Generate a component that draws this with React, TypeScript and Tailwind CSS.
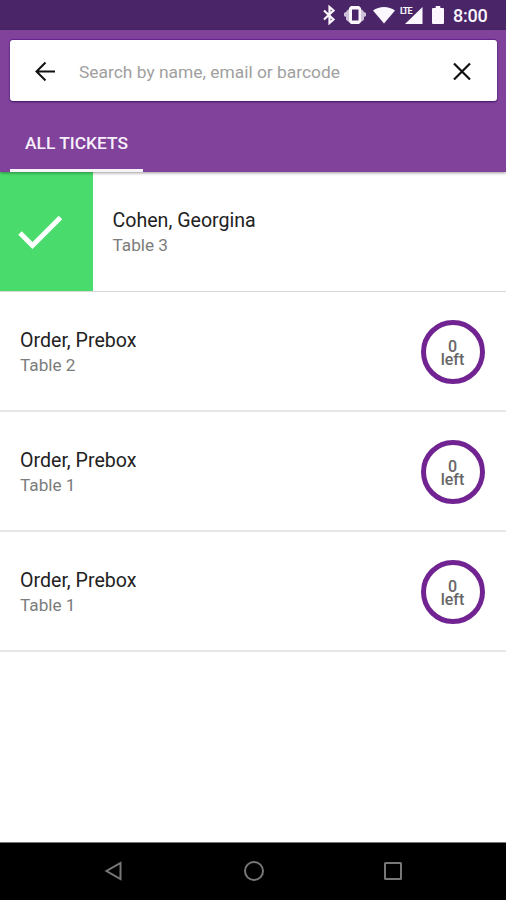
import React from 'react';

type Ticket = { name: string; table: string };

const tickets: Ticket[] = [
  { name: 'Order, Prebox', table: 'Table 2' },
  { name: 'Order, Prebox', table: 'Table 1' },
  { name: 'Order, Prebox', table: 'Table 1' },
];

function StatusBar() {
  return (
    <div className="flex h-[30px] items-center justify-end bg-[#4a2668] pr-[18px] text-[#fbf7fd]">
      <svg className="mr-[8px] h-5 w-3.5" viewBox="0 0 14 20" fill="none" stroke="currentColor" strokeWidth="2.2">
        <path d="M2 5.500 11.500 14.500 7.500 18V2L11.500 5.500 2 14.500" />
      </svg>
      <svg className="mr-[7px] h-5 w-[22px]" viewBox="0 0 22 20">
        <path fill="currentColor" opacity="0.75" d="M4 4.500h3v12H4L2 14.500V12L0 11V8l2-1zM18 4.500h-3v12h3l2-2V12l2-1V8l-2-1z" />
        <path fill="currentColor" d="M7 1h8l2 2v14l-2 2H7l-2-2V3z" />
        <path fill="#4a2668" d="M8 4.500h6.500v11H8z" />
      </svg>
      <svg className="mr-[5px] h-5 w-[22px]" viewBox="0 0 22 20" fill="currentColor">
        <path d="M0 5.500C6 .8 16 .8 22 5.500L11 18.500z" />
      </svg>
      <div className="relative mr-[9px] h-5 w-[23px]">
        <svg className="h-5 w-[23px]" viewBox="0 0 23 20" fill="currentColor">
          <path d="M22.500 2v17H5z" />
        </svg>
        <span className="absolute top-0.5 left-0 bg-[#4a2668] pr-px text-[9px] leading-[9px] font-bold tracking-[-1px]">LTE</span>
      </div>
      <svg className="mr-[9px] h-5 w-3" viewBox="0 0 12 20" fill="currentColor">
        <path d="M3.700 1h4.600v2H11q1 0 1 1v14q0 1-1 1H1q-1 0-1-1V4q0-1 1-1h2.700z" />
      </svg>
      <span className="w-[35px] pt-0.5 text-[18px] leading-5 font-medium tracking-[-0.2px] whitespace-nowrap">8:00</span>
    </div>
  );
}

function SearchBar() {
  return (
    <div className="mr-[9px] ml-2.5 flex h-[61px] items-center rounded-[3px] bg-white pr-[26px] pl-[25px] shadow-[0_1px_2px_#3d1460,0_-1px_1px_#692192]">
      <svg className="h-5 w-5 shrink-0" viewBox="0 0 20 20" fill="none" stroke="#111" strokeWidth="2">
        <path d="M20 10.500H1.500M10.500 1.500l-9 9 9 9" />
      </svg>
      <span className="ml-6 flex-1 pt-1 text-[17.400px] whitespace-nowrap text-[#a0a0a0]">Search by name, email or barcode</span>
      <svg className="h-[18px] w-[18px]" viewBox="0 0 18 18" fill="none" stroke="#111" strokeWidth="2.2">
        <path d="m1 1.500 16 16m0-16-16 16" />
      </svg>
    </div>
  );
}

function TicketText({ name, table }: Ticket) {
  return (
    <div className="flex-1 pt-0.5 whitespace-nowrap">
      <div className="text-[19.600px] leading-[25px] text-[#222]">{name}</div>
      <div className="text-[17.200px] leading-[25px] text-[#7c7c7c]">{table}</div>
    </div>
  );
}

export default function App() {
  return (
    <div className="flex h-[900px] w-[506px] flex-col overflow-hidden bg-white font-['Roboto',sans-serif]">
      <StatusBar />
      <header className="z-10 flex h-[142px] flex-col bg-[#80429a] pt-2.5 shadow-[0_1px_3px_rgba(0,0,0,0.4)]">
        <SearchBar />
        <div className="mt-auto ml-2.5 flex h-[58px] w-[133px] items-center justify-center border-b-[3px] border-[#f7f3f9] pt-1 text-[17.400px] font-medium whitespace-nowrap text-[#f8f0fb]">
          ALL TICKETS
        </div>
      </header>
      <main className="flex-1">
        <div className="flex h-[120px] items-center border-b border-[#d8d8d8]">
          <div className="mr-5 flex h-[119px] w-[92.500px] items-center bg-[#49dc6c] pl-[18px]">
            <svg className="h-[34px] w-[45px]" viewBox="0 0 45 34" fill="none" stroke="white" strokeWidth="5">
              <path d="m2 18 12.500 12.500L42.500 2.500" />
            </svg>
          </div>
          <TicketText name="Cohen, Georgina" table="Table 3" />
        </div>
        {tickets.map((ticket, i) => (
          <div key={i} className="flex h-[120px] items-center border-b-2 border-[#e6e6e6] pt-0.5 pr-[21.500px] pl-5">
            <TicketText {...ticket} />
            <div className="mb-px flex h-16 w-16 items-center justify-center rounded-full border-[5px] border-[#702391] pt-[3px] text-center text-[16px] leading-[13px] font-medium text-[#666]">
              <p>
                0<br />
                left
              </p>
            </div>
          </div>
        ))}
      </main>
      <nav className="flex h-[58px] items-center justify-between border-t border-[#777] bg-black pr-[104px] pb-0.5 pl-[104px]">
        <svg className="h-5 w-[18px]" viewBox="0 0 18 20" fill="none" stroke="#777" strokeWidth="2">
          <path d="M16.500 2v16L2.500 10z" />
        </svg>
        <svg className="ml-px h-5 w-5" viewBox="0 0 20 20" fill="none" stroke="#777" strokeWidth="2">
          <circle cx="10" cy="10" r="9" />
        </svg>
        <svg className="h-[18px] w-[18px]" viewBox="0 0 18 18" fill="none" stroke="#777" strokeWidth="2">
          <rect x="1" y="1" width="16" height="16" rx="0.5" />
        </svg>
      </nav>
    </div>
  );
}
